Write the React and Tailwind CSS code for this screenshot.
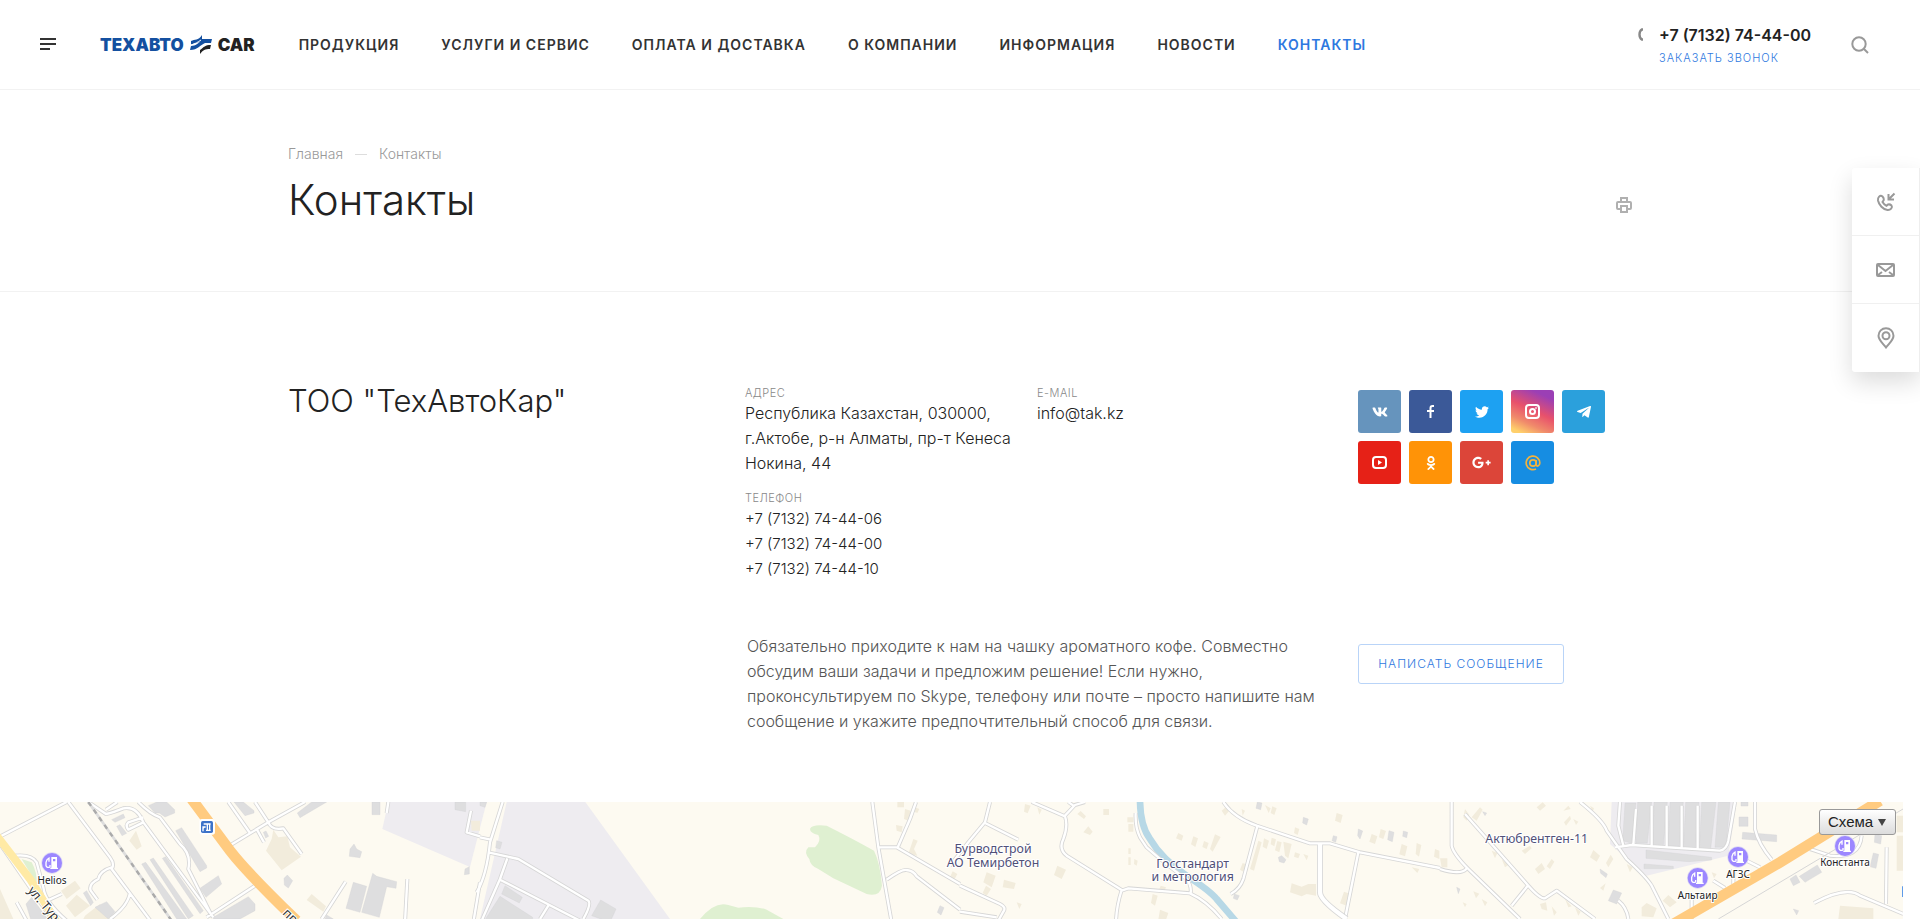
import { useState } from "react";
import { FaVk, FaTwitter, FaTelegramPlane, FaOdnoklassniki, FaGooglePlusG } from "react-icons/fa";

const menu = ["Продукция", "Услуги и сервис", "Оплата и доставка", "О компании", "Информация", "Новости", "Контакты"];

const phones = ["+7 (7132) 74-44-06", "+7 (7132) 74-44-00", "+7 (7132) 74-44-10"];

function FacebookIcon() {
  return (
    <svg width="15" height="15" viewBox="0 0 15 15" fill="none" stroke="white" strokeWidth="2">
      <path d="M11 2H9.5Q7.5 2 7.5 4V14M4 7H11" />
    </svg>
  );
}

function InstagramIcon() {
  return (
    <svg width="15" height="15" viewBox="0 0 15 15" fill="none" stroke="white" strokeWidth="2">
      <rect x="1" y="1" width="13" height="13" rx="3" />
      <circle cx="7.5" cy="7.5" r="2.5" />
      <circle cx="11" cy="4" r="0.5" strokeWidth="1" />
    </svg>
  );
}

function YoutubeIcon() {
  return (
    <svg width="15" height="15" viewBox="0 0 15 15" fill="none" stroke="white" strokeWidth="2">
      <rect x="1" y="2" width="13" height="11" rx="3" />
      <path d="M6 5V10L10 7.5Z" fill="white" stroke="none" />
    </svg>
  );
}

function MailRuIcon() {
  return (
    <svg width="16" height="16" viewBox="0 0 16 16" fill="none" stroke="#f3b33d" strokeWidth="1.7">
      <circle cx="8" cy="8" r="3.2" />
      <path d="M11.2 5V9.5Q11.4 11.3 13 11Q14.8 10.4 14.8 8A6.8 6.8 0 1 0 11 14" />
    </svg>
  );
}

const socials = [
  { name: "Вконтакте", bg: "bg-[#6694bd]", icon: <FaVk size={16} /> },
  { name: "Facebook", bg: "bg-[#3b5998]", icon: <FacebookIcon /> },
  { name: "Twitter", bg: "bg-[#1da1f2]", icon: <FaTwitter size={14} /> },
  { name: "Instagram", bg: "bg-[linear-gradient(25deg,#ffd06b_8%,#f08a6b_28%,#e8516b_52%,#9b3fb5_84%)]", icon: <InstagramIcon /> },
  { name: "Telegram", bg: "bg-[#2ba0dc]", icon: <FaTelegramPlane size={16} /> },
  { name: "YouTube", bg: "bg-[#e62117]", icon: <YoutubeIcon /> },
  { name: "Одноклассники", bg: "bg-[#ff9307]", icon: <FaOdnoklassniki size={14} /> },
  { name: "Google Plus", bg: "bg-[#dc4539]", icon: <FaGooglePlusG size={19} /> },
  { name: "Mail.ru", bg: "bg-[#168de2]", icon: <MailRuIcon /> },
];

function Logo() {
  return (
    <a href="#" className="flex items-center gap-1.5 text-[17px] leading-5 font-black" aria-label="ТехАвтоCar">
      <span className="text-[#1450a0]">ТЕХАВТО</span>
      <svg width="22" height="19" viewBox="0 0 22 19">
        <path d="M1 6C5 4 8 6 12 0V4H22L21 8H15C10 10 8 15 0 15L1 11C6 11 8 8 11 6C8 8 5 8 1 9.5Z" fill="#1450a0" />
        <path d="M1 10C5 9 8 7 11 5" fill="none" stroke="#fff" strokeWidth="1" />
        <path d="M10 19V15C14 12 15 10 21 10L20 14C15 14 13 15 10 19Z" fill="#222" />
      </svg>
      <span className="text-[#222]">CAR</span>
    </a>
  );
}

function Header() {
  return (
    <header className="flex h-[90px] items-center border-b border-[#f2f2f2] pr-[51px] pl-10">
      <button aria-label="Меню" className="mr-11">
        <svg width="16" height="13" fill="#333">
          <path d="M0 0H16V2H0ZM0 5H16V7H0ZM0 10H10V12H0Z" />
        </svg>
      </button>
      <Logo />
      <nav className="ml-11 flex gap-[42px] text-sm font-semibold tracking-[1px] whitespace-nowrap text-[#333] uppercase">
        {menu.map((item) => (
          <a key={item} href="#" className={item === "Контакты" ? "text-[#2e78e0]" : ""}>
            {item}
          </a>
        ))}
      </nav>
      <div className="ml-auto flex items-start gap-[15px] pt-1">
        <svg width="6" height="13" viewBox="0 0 6 13" className="mt-1" fill="none" stroke="#888">
          <path d="M5 1.5H3.8Q1.5 3 1.5 6.5T3.8 11.5H5" strokeWidth="2.4" />
        </svg>
        <div className="flex flex-col items-start">
          <a href="tel:+77132744400" className="text-base leading-[22px] font-semibold whitespace-nowrap text-[#222]">
            +7 (7132) 74-44-00
          </a>
          <button className="text-[11px] leading-6 font-light tracking-[1px] text-[#2e78e0] uppercase">Заказать звонок</button>
        </div>
      </div>
      <button aria-label="Поиск" className="ml-10">
        <svg width="18" height="18" viewBox="0 0 18 18" fill="none" stroke="#999" strokeWidth="2">
          <circle cx="8" cy="8" r="6.7" />
          <path d="M13 13L17 17" />
        </svg>
      </button>
    </header>
  );
}

function PageTitle() {
  return (
    <section className="border-b border-[#f2f2f2]">
      <div className="mx-auto flex h-[201px] max-w-[1344px] flex-col pt-[54px]">
        <div className="flex items-center gap-3 text-sm leading-5 font-light text-[#999]">
          <a href="#">Главная</a>
          <span className="h-px w-3 bg-[#ddd]" />
          <span>Контакты</span>
        </div>
        <div className="mt-2.5 flex items-center justify-between">
          <h1 className="text-[42px] leading-[52px] font-light text-[#222]">Контакты</h1>
          <button aria-label="Печать" className="pt-2.5">
            <svg width="16" height="16" viewBox="0 0 16 16" fill="none" stroke="#b0b0b0" strokeWidth="2">
              <path d="M5 5V1H11V5M5 12H2Q1 12 1 11V6Q1 5 2 5H14Q15 5 15 6V11Q15 12 14 12H11M5 9H11V15H5Z" />
            </svg>
          </button>
        </div>
      </div>
    </section>
  );
}

function Field({ label, children }) {
  return (
    <div className="mb-[15px]">
      <div className="text-[11px] leading-[15px] font-light tracking-[0.5px] text-[#888] uppercase">{label}</div>
      <div className="text-base leading-[25px] font-light text-[#222]">{children}</div>
    </div>
  );
}

function Contacts() {
  return (
    <section className="mx-auto max-w-[1344px] pt-[94px] pb-[68px]">
      <div className="grid grid-cols-[34%_1fr_274px]">
        <h2 className="text-[31px] leading-[30px] font-light text-[#222]">ТОО "ТехАвтоКар"</h2>
        <div className="grid grid-cols-[292px_1fr]">
          <div>
            <Field label="Адрес">
              Республика Казахстан, 030000,
              <br />
              г.Актобе, р-н Алматы, пр-т Кенеса
              <br />
              Нокина, 44
            </Field>
            <Field label="Телефон">
              {phones.map((phone) => (
                <a key={phone} href={"tel:" + phone} className="block text-[15px] leading-[25px]">
                  {phone}
                </a>
              ))}
            </Field>
          </div>
          <Field label="E-mail">
            <a href="mailto:info@tak.kz">info@tak.kz</a>
          </Field>
        </div>
        <div className="flex flex-wrap content-start gap-2 pt-1">
          {socials.map((s) => (
            <a
              key={s.name}
              href="#"
              aria-label={s.name}
              className={"flex size-[43px] items-center justify-center rounded-[3px] text-white " + s.bg}
            >
              {s.icon}
            </a>
          ))}
        </div>
      </div>
      <div className="mt-[38px] grid grid-cols-[34%_1fr_274px]">
        <p className="col-start-2 pl-0.5 text-base leading-[25px] font-light whitespace-nowrap text-[#555]">
          Обязательно приходите к нам на чашку ароматного кофе. Совместно
          <br />
          обсудим ваши задачи и предложим решение! Если нужно,
          <br />
          проконсультируем по Skype, телефону или почте – просто напишите нам
          <br />
          сообщение и укажите предпочтительный способ для связи.
        </p>
        <div className="pt-2.5">
          <button className="h-10 w-[206px] rounded-[3px] border border-[#b9d4f8] text-xs font-light tracking-[1px] whitespace-nowrap text-[#2e78e0] uppercase">
            Написать сообщение
          </button>
        </div>
      </div>
    </section>
  );
}

// map geometry is kept in four tiles, each 1440 units wide
const tiles = [
  {
    x: 0,
    roads: [
      "M-10 148L200 39M205 39L330 205Q345 225 335 240L455 400M335 235Q300 245 295 270Q265 285 272 305L292 332",
      "M265 39L318 75Q340 70 370 58Q410 50 430 100L640 385M318 62L352 39M415 39Q450 75 480 85L540 165Q575 195 565 240L635 380M430 85L385 100Q375 110 385 122L430 100",
      "M685 39L750 132M765 39L805 100L692 168M805 100L915 39M770 120L792 160M805 100Q815 125 850 118L905 195M1037 278L965 390M1222 270L1215 400M1165 39L1160 72M1413 65L1400 130L1440 142",
      "M765 290L620 385M390 310Q385 350 330 390M45 200Q95 195 110 220L130 295Q135 340 200 395M130 340L185 315M50 340L80 395M0 165L155 390M1440 280L1420 400",
    ],
    gray: [
      "M445 50L470 39H500L524 62V72L495 84L478 72H465Z", "M702 39H730L762 65V72L735 80Z", "M527 125L545 116L620 230V237L600 248Z", "M892 72L935 39H980L900 86Z",
      "M600 298L655 260L665 285L618 325Z", "M425 225L437 220L560 390H530Z", "M450 212L460 207L580 380L565 390Z", "M487 208L497 203L610 365L600 374Z",
      "M640 385L745 323L765 345V365L720 390H640Z", "M1060 280L1100 292L1080 370L1038 358Z", "M1118 253L1130 262L1190 278L1188 298L1160 293L1138 385L1085 370Z",
      "M1050 180L1062 165L1070 180L1085 188L1080 206L1048 202Z", "M1116 39H1140V77H1116Z", "M1365 39H1397V68L1365 62Z", "M852 268L862 258L878 275L865 297L853 288Z",
      "M335 92L370 75L375 86L345 100Z", "M350 112L360 107L380 133L366 140Z", "M285 355L320 338L345 368L325 390Z", "M250 312L260 305L280 340L272 350Z", "M78 345L95 325L150 400H95Z",
      "M1395 240L1408 233V255L1393 257Z", "M790 130L798 126L806 142L797 147Z", "M980 378L1000 390H975Z",
    ],
    beige: [
      "M798 185L815 150L820 122L835 145L862 142L870 175L903 203L845 244Z", "M183 305L225 275L242 298L200 330Z", "M198 350L230 317L270 350L225 385Z",
      "M255 380L300 345L330 390H250Z", "M388 155L408 125L425 172L410 182Z", "M920 333L935 315L978 352L970 368Z", "M0 300L40 390H0Z", "M1413 95H1440V125H1415Z",
    ],
  },
  {
    x: 1440,
    roads: [
      "M68 39L30 160Q20 260 -10 310M0 145L32 152M25 190L115 210L325 335Q335 345 310 390M82 208L60 270L5 395M60 272L300 395M205 350L180 390",
      "M1177 39L1195 175L1235 400M1195 175H1250L1440 285M1252 178L1290 90L1308 39M1220 272Q1265 240 1280 243Q1300 245 1310 262L1440 362",
    ],
    gray: ["M60 322L158 385V400H10Z", "M75 290L127 325L118 342L65 315Z", "M362 333L408 360L390 400L335 380Z", "M50 155L66 160L60 180L47 176Z", "M0 39H20L15 55L0 50Z", "M1380 350L1392 356L1383 378L1372 370Z"],
    beige: ["M1252 39H1272V55H1252Z", "M1275 60L1292 65L1285 95L1272 90Z", "M1248 108L1268 112L1265 130L1250 125Z", "M1300 150L1313 155L1302 180L1312 200L1285 195Z", "M1418 247L1432 255L1424 270L1410 265Z", "M1305 55L1318 60L1312 72L1302 68Z"],
  },
  {
    x: 2880,
    roads: [
      "M90 39L75 100L25 160L-30 230M75 102L175 152M215 39L315 82Q325 110 310 150Q295 180 320 200L485 303Q470 350 468 395M315 80L345 48L375 39M325 39L340 50",
      "M485 305L505 298L690 313Q740 335 785 390M527 72Q525 115 540 145L560 175Q640 245 680 270Q695 290 692 312",
      "M790 39Q820 85 890 110L1050 163H1110L1200 190L1440 237M893 108L850 270Q840 300 812 315M1080 168M1195 190L1155 390",
      "M0 290L120 345Q140 355 130 368L115 395M0 368L110 385",
    ],
    gray: ["M892 39L906 42L902 62L888 58Z", "M1030 85L1045 90L1040 108L1028 102Z", "M1287 125L1302 130L1297 158L1283 152Z", "M1330 126L1343 130L1340 146L1328 142Z", "M1195 120L1208 126L1200 150L1193 140Z", "M955 205L965 200L978 212L972 222L958 218Z", "M1120 140L1131 143L1127 160L1116 155Z", "M823 315L838 320L832 333L820 328Z"],
    beige: [
      "M80 250L107 260L95 295L70 280Z", "M132 272L167 282L162 300L128 295Z", "M78 290L93 300L80 320L68 312Z", "M292 230L318 242L305 270L282 258Z", "M370 130L385 112L398 128L390 138Z", "M430 60H447V78H430Z", "M352 75L362 66L378 82L372 90Z",
      "M502 85H520V100H502Z", "M505 105H520V128H505Z", "M655 132L670 140L665 155L648 148Z", "M700 142L714 148L706 174L693 166Z", "M732 156L746 162L740 180L727 174Z", "M765 136L782 144L758 188L750 180Z", "M785 65L800 52L808 65L795 80Z",
      "M895 155L905 160L882 245L870 240Z", "M912 148L927 155L920 180L908 173Z", "M935 146L948 151L943 172L932 166Z", "M952 156L965 160L958 190L945 184Z", "M970 158L995 165L985 208L975 200Z", "M995 283L1025 293L1045 285H1068V320L1040 315L1025 322L990 310Z",
      "M1130 72L1148 78L1142 102L1125 95Z", "M1235 135L1252 142L1245 165L1228 158Z", "M1262 120L1278 126L1270 150L1257 145Z", "M1325 165L1342 172L1335 202L1318 196Z", "M1370 162L1384 168L1377 203L1367 195Z", "M1152 308L1172 315L1160 350L1140 343Z",
      "M600 362L625 372L618 392H595Z", "M578 315L593 320L585 350L573 342Z", "M602 290L618 295L612 308H595Z", "M505 178H512V195H505Z", "M505 205H512V228H505Z", "M523 210L533 215L530 230L522 225Z", "M170 340L185 345L178 360Z", "M195 45L212 50L203 73L192 68Z", "M232 55L245 62L238 77Z",
      "M1005 190L1020 195L1015 208L1002 203Z", "M1030 195L1045 200L1040 214Z", "M1005 115L1018 120L1013 138L1002 132Z", "M937 52L950 58L943 78L932 72Z", "M915 48L932 58L926 72ZM845 60L855 65L848 80Z", "M1425 180L1438 185V210L1422 203Z", "M848 222L858 226L850 248L840 242Z", "M1355 235L1378 240L1372 252Z",
    ],
  },
  {
    x: 4320,
    roads: [
      "M35 39V170Q40 195 85 240L240 390M0 240Q65 260 80 238M75 75L265 290Q300 330 315 328L350 305L465 390M262 292L215 350",
      "M420 39Q490 95 500 125L560 210Q620 265 635 290L685 390M525 175L575 168L840 185Q860 180 865 155L885 39M540 39L535 110L550 170",
      "M588 60L580 167M635 50V170M680 50V173M725 50V176M773 50V179M945 39V120Q955 165 995 212M880 240V285M820 275L855 297",
      "M1340 175L1338 345M1122 342Q1220 290 1260 320L1390 375M1110 180L1170 200Q1260 210 1265 140M535 335Q560 355 565 390M755 330V390M920 215L960 235",
    ],
    gray: [
      "M555 42H588L575 163L548 155Z", "M593 39H635L622 163H588Z", "M642 39H682L670 170H638Z", "M690 39H730L718 172H684Z", "M737 39H777L766 178H730Z", "M785 39H828L812 180H778Z", "M835 39H870L858 175H825Z",
      "M618 183L815 205V213L745 218L618 208Z", "M612 225L700 232V239H612Z", "M908 130L1010 138V158L906 150Z", "M897 84H924V112H897Z", "M903 39H924V51H903Z", "M1078 262L1132 228L1145 250L1095 280Z", "M1050 270L1068 258L1080 280L1060 290Z",
      "M1300 192L1316 196L1308 238L1290 233Z", "M505 335L520 303L545 312L530 345Z", "M1305 135L1325 140L1322 165L1303 160Z", "M480 240L502 255L498 266L482 253Z", "M50 295L60 300L55 314ZM128 68L140 72L135 80Z", "M1060 360L1076 365L1070 378Z",
    ],
    beige: [
      "M605 355L620 342L650 358L640 385L605 382Z", "M668 335L685 318L710 340L690 355Z", "M1200 350L1300 358V390H1195Z", "M1370 80H1389V130H1370Z", "M1370 140H1389V245H1370Z", "M450 205L460 183L480 200L470 218Z", "M498 222L512 197L520 210L505 235Z",
      "M320 232L335 210L343 218L330 240Z", "M285 240L305 222L315 240L295 255Z", "M245 185L270 170L275 178L255 195Z", "M290 55L308 40L318 50L300 65Z", "M75 60L88 78L80 95L70 85Z", "M95 85L120 55L128 62L110 95Z", "M372 100L390 80L393 90L378 110Z",
      "M370 65L385 50L392 60Z", "M400 90L415 98L408 108Z", "M450 50L462 58L458 68Z", "M420 142L440 140V160Z", "M300 345L318 340L322 365L305 360Z", "M335 352L350 370L342 380Z", "M100 307L118 314L108 328Z", "M125 330L142 340L135 352Z", "M68 340L80 345L75 355Z",
      "M375 330L395 352L385 355Z", "M405 355L422 368L415 380Z", "M480 297L497 283L490 305Z", "M155 185L172 192L165 208Z", "M185 210L205 228L195 235Z", "M0 208H22V235H5Z", "M560 225L578 235L570 250Z", "M815 250L830 255L822 268Z",
    ],
  },
];

const stations = [
  { x: 156, y: 222, name: "Helios", ty: 284 },
  { x: 5535, y: 171, name: "Константа", ty: 232 },
  { x: 5214, y: 204, name: "АГЗС", ty: 266 },
  { x: 5093, y: 267, name: "Альтаир", ty: 330 },
];

const places = [
  { x: 2979, y: 192, text: "Бурводстрой" },
  { x: 2979, y: 234, text: "АО Темирбетон" },
  { x: 3578, y: 237, text: "Госстандарт" },
  { x: 3578, y: 277, text: "и метрология" },
  { x: 4610, y: 161, text: "Актюбрентген-11" },
];

function MapDrawing() {
  return (
    <svg className="block h-[117px] w-full" viewBox="0 39 5709 351" preserveAspectRatio="xMinYMin slice">
      <rect width="5709" height="390" fill="#fdfaf1" />
      <g fill="#eeecf0">
        <path d="M1165 39L1147 120L1410 234L1460 39Z" />
        <path d="M1520 39H1756L2010 390H1440Z" />
        <path d="M4835 39H5210L5185 200L4940 260L4830 165Z" />
      </g>
      <g fill="#dff0d1">
        <path d="M2430 120Q2435 105 2480 110Q2560 150 2622 185Q2640 220 2646 290Q2640 325 2600 315L2500 268L2455 240Q2430 230 2428 210Q2410 190 2425 175H2445Q2465 155 2455 138Q2430 132 2430 120Z" />
        <path d="M2100 390Q2145 335 2185 348L2215 356Q2265 350 2300 362L2350 390Z" />
        <path d="M65 210L95 220Q112 250 110 285Z" />
      </g>
      <path d="M3420 30Q3420 110 3450 150Q3485 210 3560 260Q3630 305 3650 330L3710 400" fill="none" stroke="#b7d8e6" strokeWidth="20" />
      {tiles.map((t) => (
        <g key={t.x} transform={`translate(${t.x} 0)`}>
          <path d={t.beige.join("")} fill="#f2ecdc" />
          <path d={t.gray.join("")} fill="#dededf" />
          <path d={t.gray.join("")} fill="none" stroke="#d2d2d3" strokeWidth="1" />
        </g>
      ))}
      <g fill="none" stroke="#d6d6d6" strokeWidth="12" strokeLinejoin="round">
        {tiles.map((t) => (
          <path key={t.x} d={t.roads.join("")} transform={`translate(${t.x} 0)`} />
        ))}
      </g>
      <g fill="none" stroke="#fff" strokeWidth="7" strokeLinejoin="round">
        {tiles.map((t) => (
          <path key={t.x} d={t.roads.join("")} transform={`translate(${t.x} 0)`} />
        ))}
      </g>
      <g fill="none">
        <path d="M3960 168V310Q3960 335 4040 390" stroke="#d6d6d6" strokeWidth="18" />
        <path d="M3960 165V310Q3960 335 4040 390" stroke="#fff" strokeWidth="13" />
        <path d="M265 39L515 395" stroke="#ddd" strokeWidth="8" />
        <path d="M265 39L515 395" stroke="#aaa" strokeWidth="7" strokeDasharray="14 14" />
        <path d="M-10 140L90 270L170 400" stroke="#ffeaa5" strokeWidth="24" />
        <path d="M575 30L690 185Q740 250 890 395" stroke="#ffcb80" strokeWidth="32" />
        <path d="M5020 405L5340 220L5640 35" stroke="#ffcb80" strokeWidth="32" />
        <path d="M5155 390L5709 60" stroke="#d6d6d6" strokeWidth="3" />
      </g>
      <g fontFamily="'Noto Sans', sans-serif" fontSize="38" fill="#333" stroke="#fff" strokeWidth="6" paintOrder="stroke">
        <text transform="translate(82 305) rotate(50)">ул. Тур</text>
        <text transform="translate(846 374) rotate(45)">пр.</text>
      </g>
      <rect x="598" y="90" width="47" height="47" rx="8" fill="#fff" />
      <rect x="603" y="96" width="36" height="36" rx="5" fill="#3d73c9" />
      <path d="M611 105H632M618 124H632M622 105V124M629 105V124M608 113L613 117M617 114H609V127" fill="none" stroke="#fff" strokeWidth="4" />
      {stations.map((s) => (
        <g key={s.name}>
          <circle cx={s.x} cy={s.y} r="32" fill="#ddd9f4" />
          <circle cx={s.x} cy={s.y} r="30" fill="#9c87ff" />
          <g transform={`translate(${s.x} ${s.y})`}>
            <path d="M-2 -18H15V14H18V18H-5V14H-2ZM3 -12V-5H10V-12Z" fill="#fff" fillRule="evenodd" />
            <path d="M-6 6V12Q-15 16 -18 8V-2Q-16 -12 -9 -15V-4" fill="none" stroke="#fff" strokeWidth="4" />
          </g>
          <text x={s.x} y={s.ty} textAnchor="middle" fontFamily="'Noto Sans', sans-serif" fontSize="30" fill="#222" stroke="#fff" strokeWidth="6" paintOrder="stroke">
            {s.name}
          </text>
        </g>
      ))}
      <g fontFamily="'Noto Sans', sans-serif" fontSize="37" fill="#505078" stroke="#fff" strokeWidth="6" paintOrder="stroke" textAnchor="middle">
        {places.map((p) => (
          <text key={p.text} x={p.x} y={p.y}>
            {p.text}
          </text>
        ))}
      </g>
      <path d="M5706 292H5709V324H5706Z" fill="#5f9be8" />
    </svg>
  );
}

function MapBlock() {
  const [view, setView] = useState("Схема");

  return (
    <section className="relative mr-[17px] overflow-hidden">
      <MapDrawing />
      <div className="absolute top-[7px] right-[7px]">
        <select
          aria-label="Вид карты"
          value={view}
          onChange={(e) => setView(e.target.value)}
          className="h-[26px] w-[77px] appearance-none rounded-[3px] border border-[#999] bg-linear-to-b from-white to-[#dcdcdc] pl-2 font-['Liberation_Sans',sans-serif] text-[15px] leading-6 text-[#222]"
        >
          <option>Схема</option>
          <option>Спутник</option>
          <option>Гибрид</option>
        </select>
        <svg width="8" height="7" className="pointer-events-none absolute top-2.5 right-2.5" fill="#444">
          <path d="M0 0H8L4 7Z" />
        </svg>
      </div>
    </section>
  );
}

function SidePanel() {
  return (
    <aside className="absolute top-[168px] right-0 flex w-[68px] flex-col divide-y divide-[#f0f0f0] rounded-l-[3px] border-r border-[#eee] bg-white shadow-[0_10px_25px_rgba(0,0,0,0.14)]">
      <button aria-label="Заказать звонок" className="flex h-[68px] items-center justify-center">
        <svg width="20" height="20" viewBox="0 0 20 20" fill="none" stroke="#999" strokeWidth="2">
          <path d="M18.5 1.5L13 7M12.5 2V7.5H18" />
          <path d="M6.5 4.5C4 2.5 1.5 5.5 2 8.5C3 13 7 17.5 11.5 18C14.5 18.3 17 15.5 15.5 13.5Q14 12 12 12.5L10.5 13.8Q8 12.5 6.5 10L7.8 8Q8 6 6.5 4.5Z" />
        </svg>
      </button>
      <button aria-label="Написать сообщение" className="flex h-[68px] items-center justify-center">
        <svg width="19" height="14" viewBox="0 0 19 14" fill="none" stroke="#999" strokeWidth="2">
          <rect x="1" y="1" width="17" height="12" rx="1" />
          <path d="M2 2L9.5 8L17 2M2 12L6 9M17 12L13 9" />
        </svg>
      </button>
      <button aria-label="Адрес" className="flex h-[68px] items-center justify-center">
        <svg width="18" height="22" viewBox="0 0 18 22" fill="none" stroke="#999" strokeWidth="2">
          <path d="M9 20.5C6 16.5 1.5 13 1.5 8.7A7.5 7.5 0 0 1 16.5 8.7C16.5 13 12 16.5 9 20.5Z" />
          <circle cx="9" cy="8.7" r="3.5" />
        </svg>
      </button>
    </aside>
  );
}

export default function App() {
  return (
    <div className="relative bg-white font-[Inter,sans-serif]">
      <Header />
      <main>
        <PageTitle />
        <Contacts />
        <MapBlock />
      </main>
      <SidePanel />
    </div>
  );
}
